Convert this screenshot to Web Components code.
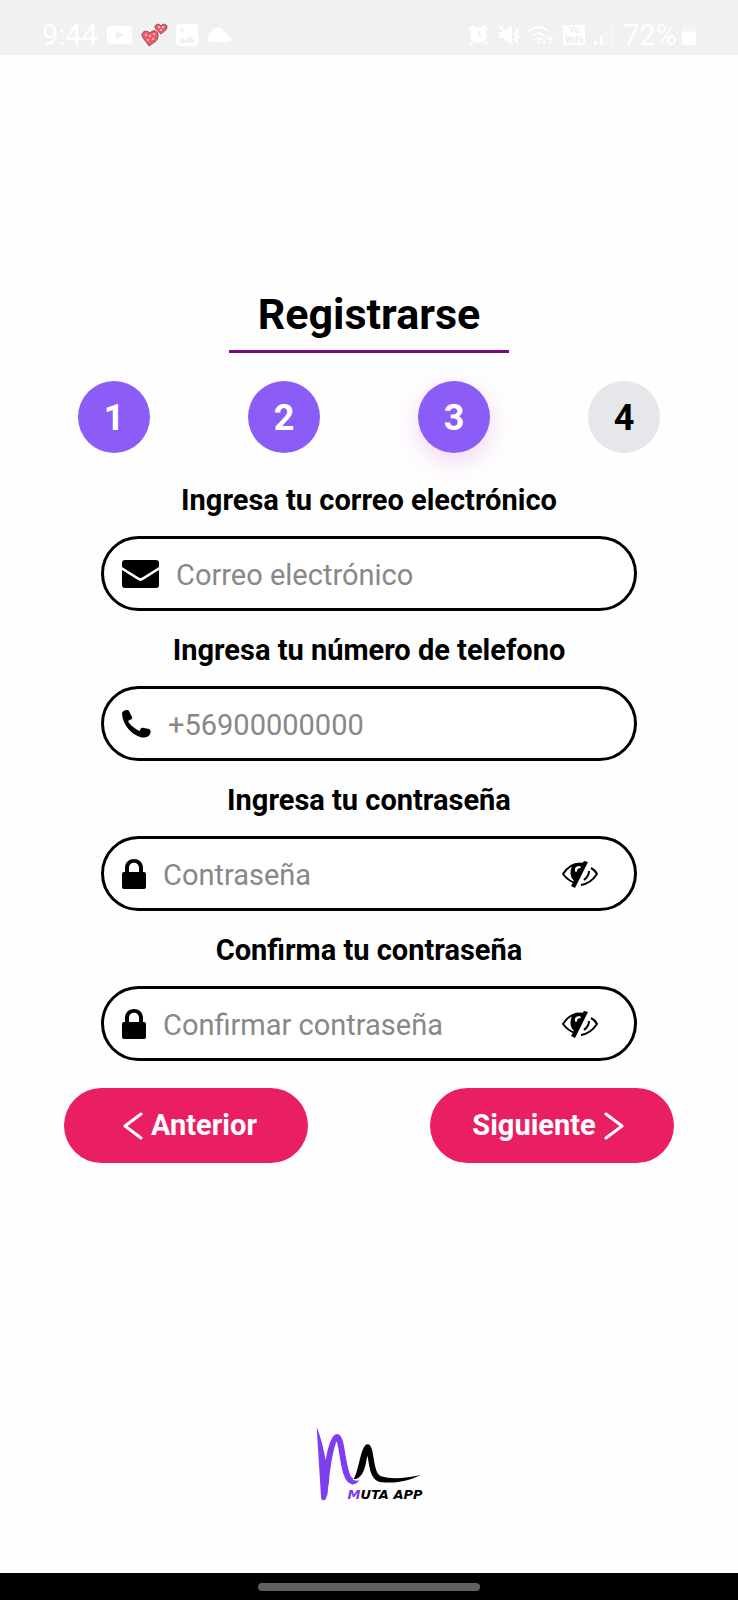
<!DOCTYPE html>
<html lang="es">
<head>
<meta charset="utf-8">
<meta name="viewport" content="width=device-width, initial-scale=1">
<title>Registrarse</title>
<style>
  body { margin: 0; background: #fefefe; color: #000; font-family: Roboto, "Liberation Sans", sans-serif; }
</style>
</head>
<body>
<muta-screen>
  <status-bar slot="status"></status-bar>
  <screen-title>Registrarse</screen-title>
  <step-list>
    <step-dot state="done">1</step-dot>
    <step-dot state="done">2</step-dot>
    <step-dot state="current">3</step-dot>
    <step-dot>4</step-dot>
  </step-list>
  <field-list>
    <text-field icon="mail" type="email" placeholder="Correo electrónico">Ingresa tu correo electrónico</text-field>
    <text-field icon="phone" type="tel" placeholder="+56900000000">Ingresa tu número de telefono</text-field>
    <text-field icon="lock" type="password" placeholder="Contraseña">Ingresa tu contraseña</text-field>
    <text-field icon="lock" type="password" placeholder="Confirmar contraseña">Confirma tu contraseña</text-field>
  </field-list>
  <button-row>
    <nav-button direction="back">Anterior</nav-button>
    <nav-button direction="next">Siguiente</nav-button>
  </button-row>
  <muta-logo slot="brand"></muta-logo>
  <gesture-bar slot="gesture"></gesture-bar>
</muta-screen>

<script>
const define = (name, html, setup) => customElements.define(name, class extends HTMLElement {
  connectedCallback() {
    if (this.shadowRoot) return;
    const root = this.attachShadow({ mode: 'open' });
    const template = document.createElement('template');
    template.innerHTML = html;
    root.append(template.content.cloneNode(true));
    if (setup) setup(this, root);
  }
});

define('muta-screen', `
  <style>
    :host { display: flex; flex-direction: column; min-height: 100vh; }
    main { flex: 1; padding-top: 233px; }
    footer { display: flex; justify-content: center; padding: 48px 0 72px; }
  </style>
  <slot name="status"></slot>
  <main><slot></slot></main>
  <footer><slot name="brand"></slot></footer>
  <slot name="gesture"></slot>`);

define('status-bar', `
  <style>
    :host { display: flex; justify-content: space-between; box-sizing: border-box; height: 55px; padding: 15px 42px 0;
      background: #f1f1f1; color: #fff; font-size: 29px; line-height: 40px; }
    div { display: flex; align-items: center; gap: 9px; }
    .left { gap: 8px; }
    svg { display: block; fill: #fff; }
    .vo { width: 22px; height: 20px; border-radius: 3px; background: #fff; color: #ececec; font-size: 9px; line-height: 10px;
      font-weight: 700; text-align: center; justify-content: center; overflow: hidden; }
    .vo p { margin: 0; }
    .vo span { display: block; }
  </style>
  <div class="left">
    <span>9:44</span>
    <svg width="27" height="20" viewBox="0 0 27 20"><path fill-rule="evenodd" d="M5 1H22Q26 1 26 5V15Q26 19 22 19H5Q1 19 1 15V5Q1 1 5 1ZM10 6V14L18 10Z"/></svg>
    <svg width="27" height="24" viewBox="0 0 27 24">
      <g fill="#ef5b66" stroke="#865055"><path d="M8 23C5 18 1 15 1 12C1 8 6 7 9 10C12 6 18 8 17 13C17 18 12 20 8 23Z"/>
      <path d="M20 11C17 8 14 6 14 4C14 1 18 0 20 3C22 0 26 1 26 4C26 7 22 9 20 11Z"/></g>
      <g fill="#fbd5d5"><circle cx="5" cy="12" r="1"/><circle cx="9" cy="13" r="1"/><circle cx="13" cy="11" r="1"/><circle cx="7" cy="17" r="1"/><circle cx="12" cy="16" r="1"/><circle cx="18" cy="4" r="1"/><circle cx="22" cy="4" r="1"/><circle cx="20" cy="7" r="1"/></g>
    </svg>
    <svg width="22" height="22" viewBox="0 0 22 22"><path fill-rule="evenodd" d="M4 0H18Q22 0 22 4V18Q22 22 18 22H4Q0 22 0 18V4Q0 0 4 0ZM3 17Q3 19 5 19H17Q19 19 19 17L14 11L9 16L6 13ZM6 4A2 2 0 1 0 6 8A2 2 0 1 0 6 4Z"/></svg>
    <svg width="27" height="18" viewBox="0 0 27 18"><path d="M6 16C0 16 0 9 5 8C6 0 16 0 18 6C22 6 22 9 22 10C27 11 26 16 22 16Z"/></svg>
  </div>
  <div>
    <svg width="21" height="22" viewBox="0 0 21 22"><path fill-rule="evenodd" d="M10 3A8 8 0 1 0 11 3ZM10 7V12L14 14V12L12 11V7Z"/><path d="M1 5L5 1L7 3L3 7ZM20 5L16 1L14 3L18 7ZM3 17L1 20L3 21L6 19ZM18 17L20 20L18 21L15 19Z"/></svg>
    <svg width="21" height="22" viewBox="0 0 21 22"><path d="M1 8H5L14 2V20L5 14H1Z"/><path d="M2 2L15 20M17 4L20 7L17 10L20 13L17 16L20 19" fill="none" stroke="#fff" stroke-width="2"/></svg>
    <svg width="26" height="22" viewBox="0 0 28 22"><g fill="none" stroke="#fff" stroke-width="2"><path d="M1 7Q11-2 22 7M5 12Q11 6 18 12M8 16Q12 13 15 16"/></g><path d="M11 21L9 18H14ZM17 16L20 20H15ZM24 12L28 16H25V21H23V16H20Z"/></svg>
    <div class="vo"><p><span>Vo</span><span>WiFi</span></p></div>
    <svg width="20" height="20" viewBox="0 0 20 20"><path d="M0 16H3V20H0ZM6 11H9V20H6Z"/><path opacity=".4" d="M11 6H14V20H11ZM16 1H19V20H16Z"/></svg>
    <span>72%</span>
    <svg style="margin-left:-4px" width="14" height="20" viewBox="0 0 14 20"><path d="M0 7H14V18Q14 20 12 20H2Q0 20 0 18Z"/><path opacity=".4" d="M2 2H12Q14 2 14 4V7H0V4Q0 2 2 2Z"/></svg>
  </div>`);

define('screen-title', `
  <style>
    :host { display: flex; justify-content: center; }
    h1 { margin: 0; padding: 0 29px 10px; border-bottom: 3px solid #7b0a80; font-size: 43px; line-height: 52px; font-weight: 700; }
  </style>
  <h1><slot></slot></h1>`);

define('step-list', `
  <style>:host { display: flex; justify-content: space-around; padding: 28px 29px 31px; }</style>
  <slot></slot>`);

define('step-dot', `
  <style>
    :host { display: grid; place-items: center; box-sizing: border-box; width: 72px; height: 72px; padding-top: 2px; border-radius: 50%; background: #e5e7eb;
      font-size: 36px; line-height: 42px; font-weight: 700; }
    :host([state]) { background: #8b5cf6; color: #fff; }
    :host([state="current"]) { box-shadow: 0 8px 24px rgba(190, 50, 190, .2); }
  </style>
  <span><slot></slot></span>`);

define('field-list', `
  <style>:host { display: grid; gap: 23px; padding: 0 101px; }</style>
  <slot></slot>`);

const icons = {
  mail: `<svg width="37" height="28" viewBox="0 0 37 28"><path d="M3 0H34Q37 0 37 3V7L21 17Q18 19 16 17L0 7V3Q0 0 3 0Z"/><path d="M0 10L16 20Q18 22 21 20L37 10V25Q37 28 34 28H3Q0 28 0 25Z"/></svg>`,
  phone: `<svg width="29" height="28" viewBox="0 0 29 28"><path d="M0 4C0 1 3 0 5 0C7 0 7 1 8 3L10 7C11 9 8 10 6 11C8 15 13 19 18 21C18 18 20 17 22 18L27 19C29 20 29 22 28 24C26 28 22 28 18 27C9 24 1 15 0 4Z"/></svg>`,
  lock: `<svg width="24" height="30" viewBox="0 0 24 30"><path d="M3 13V9C3-3 21-3 21 9V13H22Q24 13 24 15V28Q24 30 22 30H2Q0 30 0 28V15Q0 13 2 13ZM7 13H17V9C17 2 7 2 7 9Z" fill-rule="evenodd"/></svg>`
};
const eyeOff = `<svg width="36" height="27" viewBox="0 0 36 27">
  <path d="M23 3C14 1 6 5 1 13C4 17 7 20 13 22M29 7Q33 9 35 13C31 19 26 23 19 24M27 10Q27 15 22 19" fill="none" stroke="#000" stroke-width="2"/>
  <path d="M10 5Q16 2 20 3L22 0L26 1L13 27L9 25L12 20Q6 14 10 5ZM18 5Q12 5 13 10Q14 12 15 10Q15 7 19 7Z" fill-rule="evenodd"/></svg>`;

define('text-field', `
  <style>
    :host { display: block; }
    label { display: block; margin-bottom: 19px; text-align: center; font-size: 29px; line-height: 33px; font-weight: 700; }
    .box { display: flex; align-items: center; box-sizing: border-box; height: 75px; padding: 0 36px 0 18px; border: 3px solid #000; border-radius: 38px; background: #fff; }
    input { flex: 1; min-width: 0; height: 40px; margin: 0 0 0 17px; padding: 2px 0 0; border: 0; outline: 0; background: none; font: inherit; font-size: 29px; color: #000; }
    input::placeholder { color: #888; opacity: 1; }
    button { margin: 0; padding: 2px 0 0; border: 0; background: none; cursor: pointer; }
    svg { display: block; flex: none; }
  </style>
  <label for="value"><slot></slot></label>
  <div class="box"><input id="value"></div>`, (host, root) => {
  const input = root.querySelector('input');
  input.type = host.getAttribute('type');
  input.placeholder = host.getAttribute('placeholder');
  input.insertAdjacentHTML('beforebegin', icons[host.getAttribute('icon')]);
  if (input.type === 'password') {
    input.insertAdjacentHTML('afterend', `<button type="button" aria-label="Mostrar contraseña">${eyeOff}</button>`);
    root.querySelector('button').addEventListener('click', () => {
      input.type = input.type === 'password' ? 'text' : 'password';
    });
  }
});

define('button-row', `
  <style>:host { display: flex; justify-content: space-between; gap: 24px; padding: 27px 64px 0; }</style>
  <slot></slot>`);

define('nav-button', `
  <style>
    :host { display: block; flex: 0 1 244px; }
    button { display: flex; align-items: center; justify-content: center; gap: 8px; width: 100%; height: 75px; margin: 0; padding: 0;
      border: 0; border-radius: 38px; background: #e91e63; color: #fff; font: inherit; font-size: 29px; line-height: 33px; font-weight: 700; cursor: pointer; }
    :host([direction="next"]) button { flex-direction: row-reverse; }
    :host([direction="next"]) path { transform: scaleX(-1); transform-origin: center; }
    svg { display: block; flex: none; }
  </style>
  <button type="button">
    <svg width="28" height="28" viewBox="0 0 28 28"><path d="M26 2L10 14L26 26" fill="none" stroke="#fff" stroke-width="3" stroke-linecap="round" stroke-linejoin="round"/></svg>
    <span><slot></slot></span>
  </button>`);

define('muta-logo', `
  <style>
    :host { display: grid; justify-items: end; }
    svg, span { grid-area: 1 / 1; }
    svg { display: block; }
    span { align-self: end; font: italic 700 13px/12px "DejaVu Sans", sans-serif; }
    b { color: #7c3aed; }
  </style>
  <svg width="107" height="75" viewBox="48 48 321 225" aria-hidden="true">
    <path fill="#7c3fef" d="M50 50L63 260Q64 272 71 271Q79 270 80 258L88 205L77 150Q66 90 50 50Z"/>
    <path fill="none" stroke="#7c3fef" stroke-width="18" d="M73 256C80 175 94 82 111 81C129 82 126 210 158 214"/>
    <path fill="#7c3fef" d="M148 205Q164 215 178 211Q169 225 155 223Z"/>
    <path d="M161 208C178 180 182 103 203 103C226 104 216 188 243 199C276 209 320 204 362 195C325 214 286 220 246 217C205 213 209 156 202 138C197 158 194 206 161 208Z"/>
  </svg>
  <span><b>M</b>UTA APP</span>`);

define('gesture-bar', `
  <style>
    :host { display: flex; align-items: center; justify-content: center; height: 27px; background: #000; }
    i { display: block; width: 30%; height: 8px; border-radius: 4px; background: #606060; }
  </style>
  <i></i>`);
</script>
</body>
</html>
